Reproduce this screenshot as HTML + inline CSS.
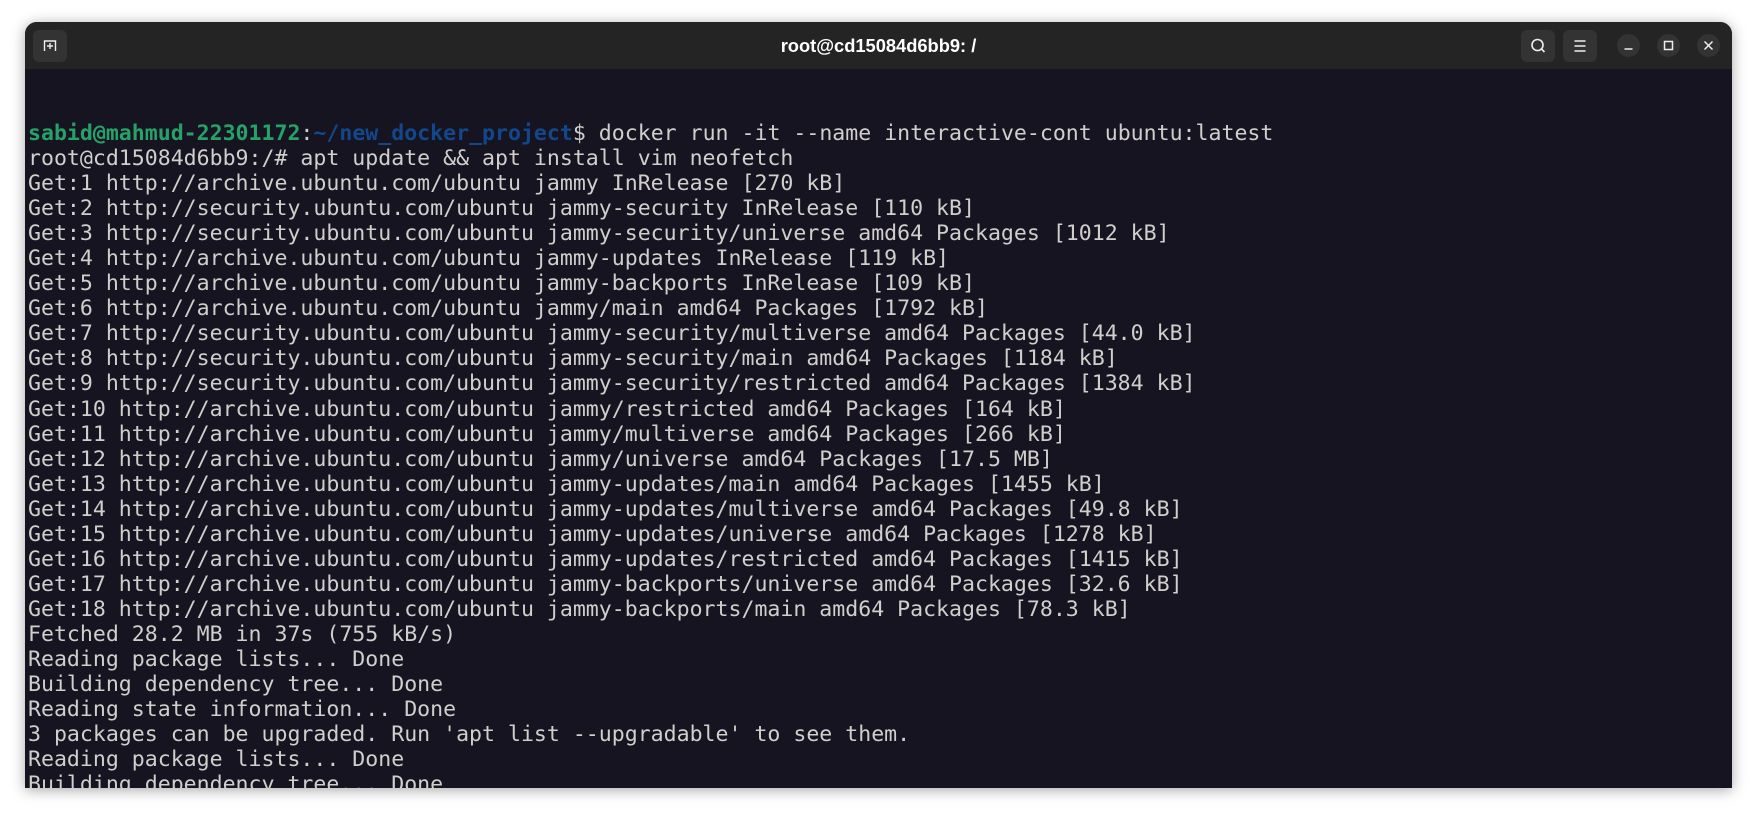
<!DOCTYPE html>
<html><head><meta charset="utf-8"><style>
html,body{margin:0;padding:0;background:#fff;width:1757px;height:817px;overflow:hidden}
.win{position:absolute;left:25px;top:22px;width:1707px;height:766px;background:#171421;border-radius:12px 12px 0 0;box-shadow:0 2px 14px rgba(0,0,0,.35);overflow:hidden}
.bar{position:absolute;left:0;top:0;width:100%;height:47px;background:#242424}
.title{position:absolute;left:0;right:0;top:0;text-align:center;color:#fff;font:bold 18.3px "Liberation Sans",sans-serif;line-height:47px}
.btn{position:absolute;top:8px;width:34px;height:32px;background:#333;border-radius:6px}
.circ{position:absolute;top:12px;width:23px;height:23px;border-radius:50%;background:#333}
pre{position:absolute;left:3px;top:99px;margin:0;font-family:"DejaVu Sans Mono","Liberation Mono",monospace;font-size:21.55px;line-height:25.05px;color:#d0cfcc}
.g{color:#26a269;font-weight:bold}.b{color:#12488b;font-weight:bold}
</style></head><body>
<div class="win">
<div class="bar">
<div class="btn" style="left:8px"><svg width="34" height="32" viewBox="0 0 34 32"><path d="M11.5 21V11h11v10M14 16h6M17 13v6" stroke="#eee" stroke-width="1.4" fill="none"/></svg></div>
<div class="title">root@cd15084d6bb9: /</div>
<div class="btn" style="left:1496px"><svg width="34" height="32" viewBox="0 0 34 32"><circle cx="16.5" cy="15" r="5.5" stroke="#eee" stroke-width="1.6" fill="none"/><path d="M20.5 19l3 3" stroke="#eee" stroke-width="1.6"/></svg></div>
<div class="btn" style="left:1538px"><svg width="34" height="32" viewBox="0 0 34 32"><path d="M11.5 11h11M11.5 16h11M11.5 21h11" stroke="#eee" stroke-width="1.4"/></svg></div>
<div class="circ" style="left:1592px"><svg width="23" height="23"><path d="M7.5 15h8" stroke="#eee" stroke-width="1.5"/></svg></div>
<div class="circ" style="left:1632px"><svg width="23" height="23"><rect x="7.5" y="7.5" width="8" height="8" stroke="#eee" stroke-width="1.5" fill="none"/></svg></div>
<div class="circ" style="left:1672px"><svg width="23" height="23"><path d="M7.5 7.5l8 8M15.5 7.5l-8 8" stroke="#eee" stroke-width="1.5"/></svg></div>
</div>
<pre><span class="g">sabid@mahmud-22301172</span>:<span class="b">~/new_docker_project</span>$ docker run -it --name interactive-cont ubuntu:latest
root@cd15084d6bb9:/# apt update &amp;&amp; apt install vim neofetch
Get:1 http://archive.ubuntu.com/ubuntu jammy InRelease [270 kB]
Get:2 http://security.ubuntu.com/ubuntu jammy-security InRelease [110 kB]
Get:3 http://security.ubuntu.com/ubuntu jammy-security/universe amd64 Packages [1012 kB]
Get:4 http://archive.ubuntu.com/ubuntu jammy-updates InRelease [119 kB]
Get:5 http://archive.ubuntu.com/ubuntu jammy-backports InRelease [109 kB]
Get:6 http://archive.ubuntu.com/ubuntu jammy/main amd64 Packages [1792 kB]
Get:7 http://security.ubuntu.com/ubuntu jammy-security/multiverse amd64 Packages [44.0 kB]
Get:8 http://security.ubuntu.com/ubuntu jammy-security/main amd64 Packages [1184 kB]
Get:9 http://security.ubuntu.com/ubuntu jammy-security/restricted amd64 Packages [1384 kB]
Get:10 http://archive.ubuntu.com/ubuntu jammy/restricted amd64 Packages [164 kB]
Get:11 http://archive.ubuntu.com/ubuntu jammy/multiverse amd64 Packages [266 kB]
Get:12 http://archive.ubuntu.com/ubuntu jammy/universe amd64 Packages [17.5 MB]
Get:13 http://archive.ubuntu.com/ubuntu jammy-updates/main amd64 Packages [1455 kB]
Get:14 http://archive.ubuntu.com/ubuntu jammy-updates/multiverse amd64 Packages [49.8 kB]
Get:15 http://archive.ubuntu.com/ubuntu jammy-updates/universe amd64 Packages [1278 kB]
Get:16 http://archive.ubuntu.com/ubuntu jammy-updates/restricted amd64 Packages [1415 kB]
Get:17 http://archive.ubuntu.com/ubuntu jammy-backports/universe amd64 Packages [32.6 kB]
Get:18 http://archive.ubuntu.com/ubuntu jammy-backports/main amd64 Packages [78.3 kB]
Fetched 28.2 MB in 37s (755 kB/s)
Reading package lists... Done
Building dependency tree... Done
Reading state information... Done
3 packages can be upgraded. Run 'apt list --upgradable' to see them.
Reading package lists... Done
Building dependency tree... Done</pre>
</div>
</body></html>
